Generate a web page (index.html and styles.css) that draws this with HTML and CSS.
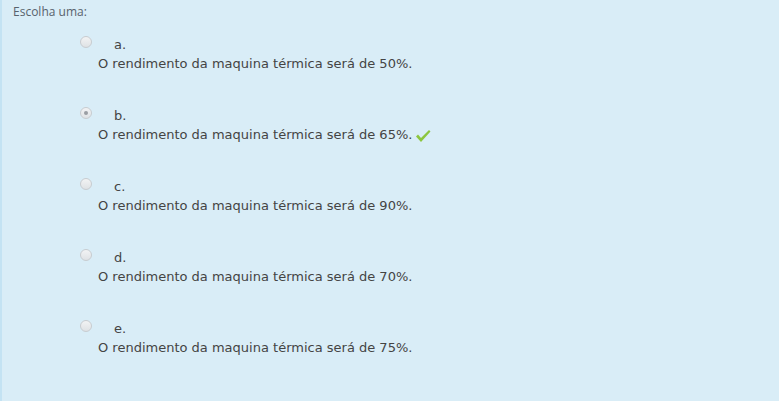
FILE: index.html
```html
<!DOCTYPE html>
<html>
<head>
    <title>Escolha uma</title>
    <link rel="stylesheet" href="styles.css">
</head>
<body>
    <div class="ablock">
        <div class="prompt">Escolha uma:</div>
        <div class="answer">
            <div class="option">
                <div class="head"><span class="radio"></span><span class="num">a.</span></div>
                <div class="text">O rendimento da maquina térmica será de 50%.</div>
            </div>
            <div class="option">
                <div class="head"><span class="radio checked"></span><span class="num">b.</span></div>
                <div class="text">O rendimento da maquina térmica será de 65%.
                    <svg class="tick" width="16" height="14" viewBox="0 0 16 14"><path d="M1 7.5 L3 5.5 L6 9 L14 1 L15.5 2.5 L6 13 Z" fill="#8cc63e"/></svg>
                </div>
            </div>
            <div class="option">
                <div class="head"><span class="radio"></span><span class="num">c.</span></div>
                <div class="text">O rendimento da maquina térmica será de 90%.</div>
            </div>
            <div class="option">
                <div class="head"><span class="radio"></span><span class="num">d.</span></div>
                <div class="text">O rendimento da maquina térmica será de 70%.</div>
            </div>
            <div class="option">
                <div class="head"><span class="radio"></span><span class="num">e.</span></div>
                <div class="text">O rendimento da maquina térmica será de 75%.</div>
            </div>
        </div>
    </div>
</body>
</html>
```

FILE: styles.css
```css
html, body {
    margin: 0;
    padding: 0;
}
body {
    font-family: "DejaVu Sans", sans-serif;
    font-size: 13px;
    color: #444;
    background: #d9edf7;
    height: 401px;
    border-left: 2px solid #c4e3f3;
    box-sizing: border-box;
}
.ablock {
    padding: 4px 0 0 11px;
}
.prompt {
    font-family: "Open Sans", sans-serif;
    color: #58626c;
    font-size: 12px;
    line-height: 16px;
}
.answer {
    padding-top: 14px;
}
.option {
    height: 71px;
}
.head {
    display: flex;
    align-items: flex-start;
    padding-left: 67px;
    height: 18px;
}
.radio {
    width: 10px;
    height: 10px;
    margin-top: 2px;
    border: 1px solid #c8ccd0;
    border-radius: 50%;
    background: linear-gradient(#f2f3f4, #dfe2e5);
    box-sizing: content-box;
    position: relative;
}
.radio.checked::after {
    content: "";
    position: absolute;
    left: 3px;
    top: 3px;
    width: 4px;
    height: 4px;
    border-radius: 50%;
    background: #9a9ea3;
}
.num {
    margin-left: 22px;
    line-height: 16px;
    margin-top: 3px;
}
.text {
    padding-left: 85px;
    line-height: 16px;
    margin-top: 4px;
    display: flex;
    align-items: center;
    gap: 3px;
}
.tick {
    margin-top: 1px;
}
```
